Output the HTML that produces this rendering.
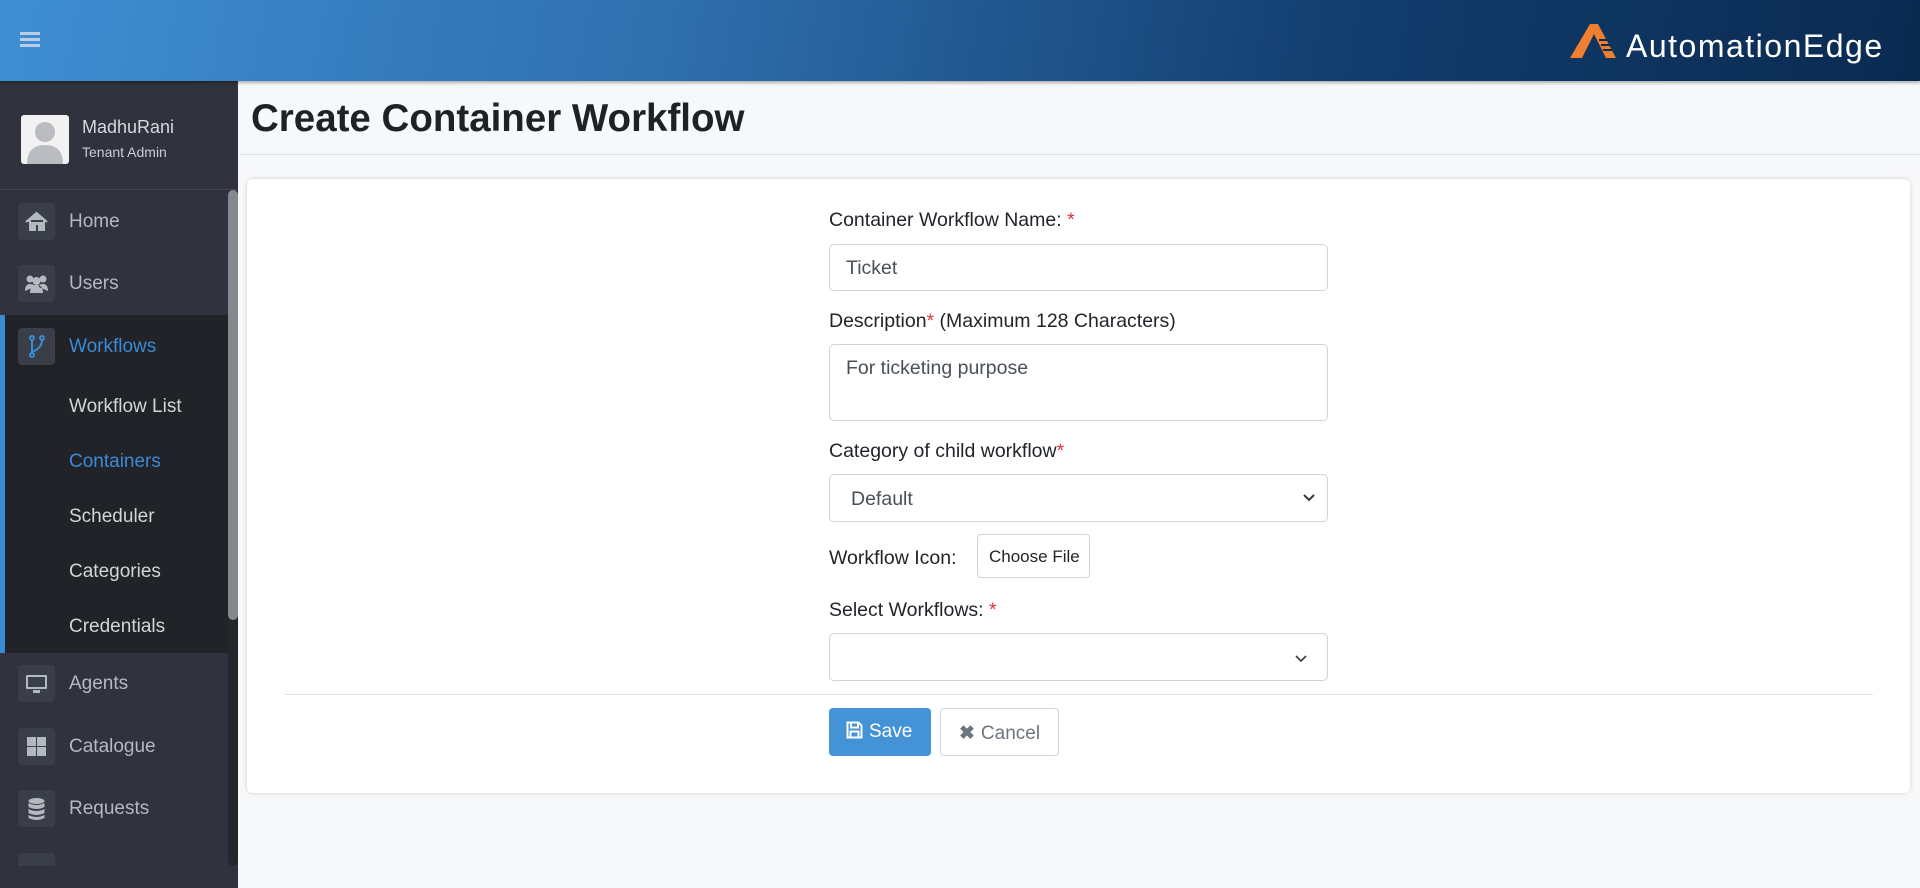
<!DOCTYPE html>
<html><head><meta charset="utf-8"><style>
*{box-sizing:border-box;margin:0;padding:0}
html,body{width:1920px;height:888px;overflow:hidden}
body{background:#f7f8fa;font-family:"Liberation Sans",sans-serif;position:relative}
.hdr{position:absolute;left:0;top:0;width:1920px;height:81px;background:linear-gradient(100deg,#3f8fd3 0%,#2f6fae 35%,#123d6e 70%,#0a2a50 100%);box-shadow:0 2px 3px rgba(0,0,0,.3);z-index:3}
.burger{position:absolute;left:20px;top:32px;width:20px}
.burger i{display:block;height:3px;background:#b9cde6;margin-bottom:3px}
.logo{position:absolute;left:1568px;top:18px}
.side{position:absolute;left:0;top:81px;width:238px;height:807px;background:#30333d;overflow:hidden}
.av{position:absolute;left:21px;top:34px;width:48px;height:49px;background:#f2f2f2;border-radius:3px;overflow:hidden}
.name{position:absolute;left:82px;top:36px;color:#d6d8dc;font-size:18px}
.role{position:absolute;left:82px;top:63px;color:#c9ccd2;font-size:14px}
.div{position:absolute;left:0;top:108px;width:238px;height:1px;background:#41454f}
.it{position:absolute;left:0;width:228px;height:40px}
.ib{position:absolute;left:18px;top:0;width:37px;height:37px;background:#3a3e48;border-radius:4px}
.it span{position:absolute;left:69px;top:8px;font-size:19px;color:#b4b8bf}
.wf{position:absolute;left:0;top:234px;width:228px;height:338px;background:#212328;border-left:5px solid #3b8ad6}
.sub{position:absolute;left:64px;font-size:19px;color:#d2d4d8}
.scroll{position:absolute;left:228px;top:109px;width:10px;height:676px;background:#23262b;border-radius:5px}
.scroll i{display:block;width:10px;height:430px;background:#85888d;border-radius:5px}
.tbar{position:absolute;left:240px;top:81px;width:1680px;height:74px;background:#f7f8fa;border-bottom:1px solid #dfe1e4}
.tbar h1{position:absolute;left:11px;top:16px;font-size:38.5px;font-weight:bold;color:#1e2125}
.card{position:absolute;left:247px;top:179px;width:1663px;height:614px;background:#fff;border-radius:6px;box-shadow:0 0 5px rgba(0,0,0,.15)}
.lb{position:absolute;left:829px;font-size:19.5px;color:#212529}
.r{color:#dc3545}
.in{position:absolute;left:829px;width:499px;border:1px solid #ced4da;border-radius:5px;background:#fff;font-size:19.5px;color:#495057}
.btn{position:absolute;border-radius:4px;font-size:19px;white-space:nowrap}
</style></head><body>
<div class="hdr"><div class="burger"><i></i><i></i><i></i></div>
<div class="logo"><svg width="352" height="46" viewBox="0 0 352 46">
<path d="M2 40 L22 6 L30 6 L48 40 L38 40 L26 16 L14 40Z" fill="#f07f2f"/>
<path d="M31 22h8M33 27h9M35 32h9" stroke="#0a2a50" stroke-width="2"/>
<text x="58" y="39" font-family="Liberation Sans,sans-serif" font-size="32" fill="#fff" letter-spacing="1.5">AutomationEdge</text></svg></div></div>
<div class="side">
<div class="av"><svg width="48" height="49"><circle cx="24" cy="17" r="10" fill="#b9bcc0"/><path d="M6 49 Q6 30 24 30 Q42 30 42 49Z" fill="#b9bcc0"/></svg></div>
<div class="name">MadhuRani</div><div class="role">Tenant Admin</div>
<div class="div"></div>
<div class="it" style="top:122px"><div class="ib"><svg width="37" height="37"><path d="M8 19 L18.5 10 L29 19 M12 17v10h5v-6h4v6h5V17" fill="#b4b8bf" stroke="#b4b8bf" stroke-width="2"/></svg></div><span>Home</span></div>
<div class="it" style="top:184px"><div class="ib"><svg width="37" height="37" fill="#b4b8bf"><circle cx="12" cy="14" r="3.5"/><circle cx="25" cy="14" r="3.5"/><circle cx="18.5" cy="16" r="4"/><path d="M7 26q0-7 5-7t4 3M30 26q0-7-5-7t-4 3M12 28q0-8 6.5-8t6.5 8z"/></svg></div><span>Users</span></div>
<div class="wf">
<div style="left:13px;top:13px;width:37px;height:37px;position:absolute;background:#3a3e48;border-radius:4px"><svg width="37" height="37" stroke="#3b8ad6" stroke-width="2" fill="none"><circle cx="14" cy="10" r="2"/><circle cx="24" cy="10" r="2"/><circle cx="14" cy="27" r="2"/><path d="M14 12v13M24 12q0 8-10 12"/></svg></div>
<span style="position:absolute;left:64px;top:21px;font-size:19px;color:#3b8ad6">Workflows</span>
<div class="sub" style="top:81px">Workflow List</div>
<div class="sub" style="top:136px;color:#3b8ad6">Containers</div>
<div class="sub" style="top:191px">Scheduler</div>
<div class="sub" style="top:246px">Categories</div>
<div class="sub" style="top:301px">Credentials</div>
</div>
<div class="it" style="top:584px"><div class="ib"><svg width="37" height="37" fill="#b4b8bf"><rect x="8" y="10" width="21" height="14" rx="1"/><rect x="10" y="12" width="17" height="10" fill="#3a3e48"/><rect x="15" y="25" width="7" height="3"/></svg></div><span>Agents</span></div>
<div class="it" style="top:647px"><div class="ib"><svg width="37" height="37" fill="#b4b8bf"><rect x="9" y="9" width="9" height="9"/><rect x="19" y="9" width="9" height="9"/><rect x="9" y="19" width="9" height="9"/><rect x="19" y="19" width="9" height="9"/></svg></div><span>Catalogue</span></div>
<div class="it" style="top:709px"><div class="ib"><svg width="37" height="37" fill="#b4b8bf"><ellipse cx="18.5" cy="11" rx="8" ry="3"/><path d="M10.5 13q8 4 16 0v4q-8 4-16 0zM10.5 19q8 4 16 0v4q-8 4-16 0zM10.5 25q8 4 16 0v3q-8 4-16 0z"/></svg></div><span>Requests</span></div>
<div class="it" style="top:772px;height:13px;overflow:hidden"><div class="ib"></div></div>
<div class="scroll"><i></i></div>
</div>
<div class="tbar"><h1>Create Container Workflow</h1></div>
<div class="card"></div>
<div class="lb" style="top:209px">Container Workflow Name: <span class="r">*</span></div>
<div class="in" style="top:244px;height:47px;padding:12px 16px">Ticket</div>
<div class="lb" style="top:310px">Description<span class="r">*</span> (Maximum 128 Characters)</div>
<div class="in" style="top:344px;height:77px;padding:12px 16px">For ticketing purpose</div>
<div class="lb" style="top:440px">Category of child workflow<span class="r">*</span></div>
<div class="in" style="top:474px;height:48px;padding:13px 21px">Default<svg style="position:absolute;right:12px;top:19px" width="12" height="8"><path d="M1 1l5 5 5-5" stroke="#343a40" stroke-width="2" fill="none"/></svg></div>
<div class="lb" style="top:547px">Workflow Icon:</div>
<div class="btn" style="left:977px;top:534px;width:113px;height:44px;border:1px solid #ced4da;font-size:17px;color:#212529;padding:12px 0 0 11px">Choose File</div>
<div class="lb" style="top:599px">Select Workflows: <span class="r">*</span></div>
<div class="in" style="top:633px;height:48px"><svg style="position:absolute;right:20px;top:21px" width="12" height="8"><path d="M1 1l5 5 5-5" stroke="#343a40" stroke-width="1.6" fill="none"/></svg></div>
<div style="position:absolute;left:285px;top:694px;width:1588px;height:1px;background:#dee2e6"></div>
<div class="btn" style="left:829px;top:708px;width:102px;height:48px;background:#4393d6;color:#fff;padding:13px 0 0 17px"><svg width="17" height="18" style="vertical-align:-2px;margin-right:6px"><path d="M1.5 1.5h11l3 3v12h-14z M5 1.5v5h7v-5 M4.5 10.5h8v6h-8z" stroke="#fff" stroke-width="2" fill="none"/></svg>Save</div>
<div class="btn" style="left:940px;top:708px;width:119px;height:48px;border:1px solid #ced4da;color:#6c757d;padding:13px 0 0 18px"><span style="font-weight:bold;color:#6c757d;margin-right:6px">✖</span>Cancel</div>
</body></html>
